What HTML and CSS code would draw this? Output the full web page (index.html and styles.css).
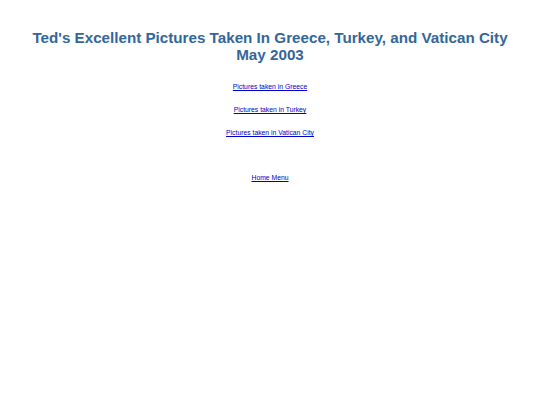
FILE: index.html
```html
<!DOCTYPE html>
<html>
<head>
<meta charset="utf-8">
<link rel="stylesheet" href="styles.css">
</head>
<body>
<div class="page">
  <h1 class="title">Ted's Excellent Pictures Taken In Greece, Turkey, and Vatican City<br>May 2003</h1>
  <p class="link-row"><a href="#">Pictures taken in Greece</a></p>
  <p class="link-row"><a href="#">Pictures taken in Turkey</a></p>
  <p class="link-row"><a href="#">Pictures taken in Vatican City</a></p>
  <p class="link-row home"><a href="#">Home Menu</a></p>
</div>
</body>
</html>
```
FILE: styles.css
```css
html, body { margin: 0; padding: 0; background: #fff; }
body { font-family: "Liberation Sans", Arial, sans-serif; }
.page { padding-top: 29px; text-align: center; }
.title {
  margin: 0 0 19px;
  font-size: 15.2px;
  line-height: 17px;
  font-weight: bold;
  color: #336699;
}
.link-row {
  margin: 0 0 14px;
  font-size: 6.8px;
  line-height: 9px;
}
.link-row a { color: #0000cc; }
.home { margin-top: 36px; }
```
